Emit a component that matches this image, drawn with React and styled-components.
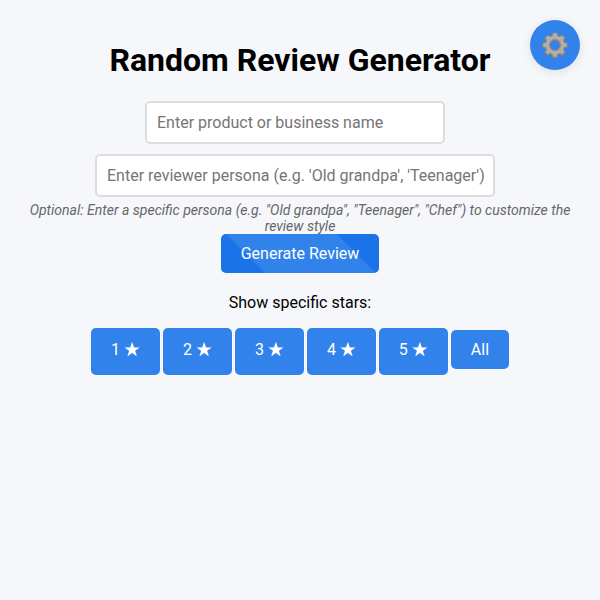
import React, { useState } from "react";
import styled, { createGlobalStyle } from "styled-components";

const GlobalStyle = createGlobalStyle`
  body {
    margin: 0;
    background: #f5f7fb;
    color: #000;
    font-family: Roboto, sans-serif;
    font-size: 16px;
  }
`;

const Page = styled.main`
  display: flex;
  flex-direction: column;
  align-items: center;
  padding: 41px 20px 20px;
  text-align: center;
`;

const Title = styled.h1`
  margin: 0 0 22px;
  font-size: 32px;
  line-height: 38px;
`;

const TextInput = styled.input`
  box-sizing: border-box;
  width: ${(props) => (props.$wide ? "400px" : "300px")};
  max-width: 100%;
  margin: 0 10px ${(props) => (props.$wide ? "5px" : "10px")} 0;
  padding: 10px 8px 10px 10px;
  border: 2px solid #ddd;
  border-radius: 5px;
  background: #fff;
  font: inherit;
  line-height: 19px;
  &::placeholder {
    color: #757575;
  }
`;

const Hint = styled.p`
  margin: 0;
  color: #666;
  font-size: 14px;
  line-height: 16px;
  font-style: italic;
`;

const Button = styled.button`
  padding: 10px 20px;
  border: none;
  border-radius: 5px;
  background: #3182ea;
  color: #fff;
  font: inherit;
  line-height: 19px;
  cursor: pointer;
`;

const GenerateButton = styled(Button)`
  background: linear-gradient(45deg, #1a73e8 22%, #3182ea 23%, #3182ea 78%, #1a73e8 79%);
`;

const StarButton = styled(Button)`
  padding: 12px 20px 16px;
`;

const Star = styled.span`
  font-family: "Noto Sans CJK JP", sans-serif;
  line-height: 0;
`;

const FilterLabel = styled.p`
  margin: 20px 0 16px;
  line-height: 19px;
`;

const Filters = styled.div`
  display: flex;
  flex-wrap: wrap;
  justify-content: center;
  align-items: baseline;
  gap: 3px;
`;

const SettingsButton = styled.button`
  position: fixed;
  top: 20px;
  right: 20px;
  display: flex;
  align-items: center;
  justify-content: center;
  width: 50px;
  height: 50px;
  padding: 0;
  border: none;
  border-radius: 50%;
  background: #3182ea;
  box-shadow: 0 2px 10px rgba(0, 0, 0, 0.1);
  cursor: pointer;
`;

const teeth = [0, 45, 90, 135, 180, 225, 270, 315];

function GearIcon() {
  return (
    <svg width="28" height="28" viewBox="0 0 28 28" fill="none" aria-hidden="true">
      <g stroke="#7b8088" fill="#7b8088">
        {teeth.map((angle) => (
          <path
            key={angle}
            d="M11.2 6 L11.9 2 H16.1 L16.8 6 Z"
            strokeWidth="1.2"
            strokeLinejoin="round"
            transform={`rotate(${angle} 14 14.4)`}
          />
        ))}
        <circle cx="14" cy="14.4" r="7.4" strokeWidth="5.8" fill="none" />
      </g>
      <g fill="#b0aeaa">
        {teeth.map((angle) => (
          <path
            key={angle}
            d="M11.4 7 L12.2 2.2 H15.8 L16.6 7 Z"
            transform={`rotate(${angle} 14 14)`}
          />
        ))}
        <circle cx="14" cy="14" r="7.5" stroke="#b0aeaa" strokeWidth="3.8" fill="none" />
      </g>
      <circle cx="14" cy="14" r="5.4" stroke="#85888c" strokeWidth="1" />
    </svg>
  );
}

export default function App() {
  const [product, setProduct] = useState("");
  const [persona, setPersona] = useState("");

  return (
    <>
      <GlobalStyle />
      <SettingsButton type="button" aria-label="Settings">
        <GearIcon />
      </SettingsButton>
      <Page>
        <Title>Random Review Generator</Title>
        <TextInput
          type="text"
          aria-label="Product or business name"
          placeholder="Enter product or business name"
          value={product}
          onChange={(e) => setProduct(e.target.value)}
        />
        <TextInput
          $wide
          type="text"
          aria-label="Reviewer persona"
          aria-describedby="persona-hint"
          placeholder="Enter reviewer persona (e.g. 'Old grandpa', 'Teenager')"
          value={persona}
          onChange={(e) => setPersona(e.target.value)}
        />
        <Hint id="persona-hint">
          Optional: Enter a specific persona (e.g. "Old grandpa", "Teenager", "Chef") to customize the review style
        </Hint>
        <GenerateButton type="button">Generate Review</GenerateButton>
        <FilterLabel id="filter-label">Show specific stars:</FilterLabel>
        <Filters role="group" aria-labelledby="filter-label">
          {[1, 2, 3, 4, 5].map((n) => (
            <StarButton type="button" key={n}>
              {n} <Star>★</Star>
            </StarButton>
          ))}
          <Button type="button">All</Button>
        </Filters>
      </Page>
    </>
  );
}
